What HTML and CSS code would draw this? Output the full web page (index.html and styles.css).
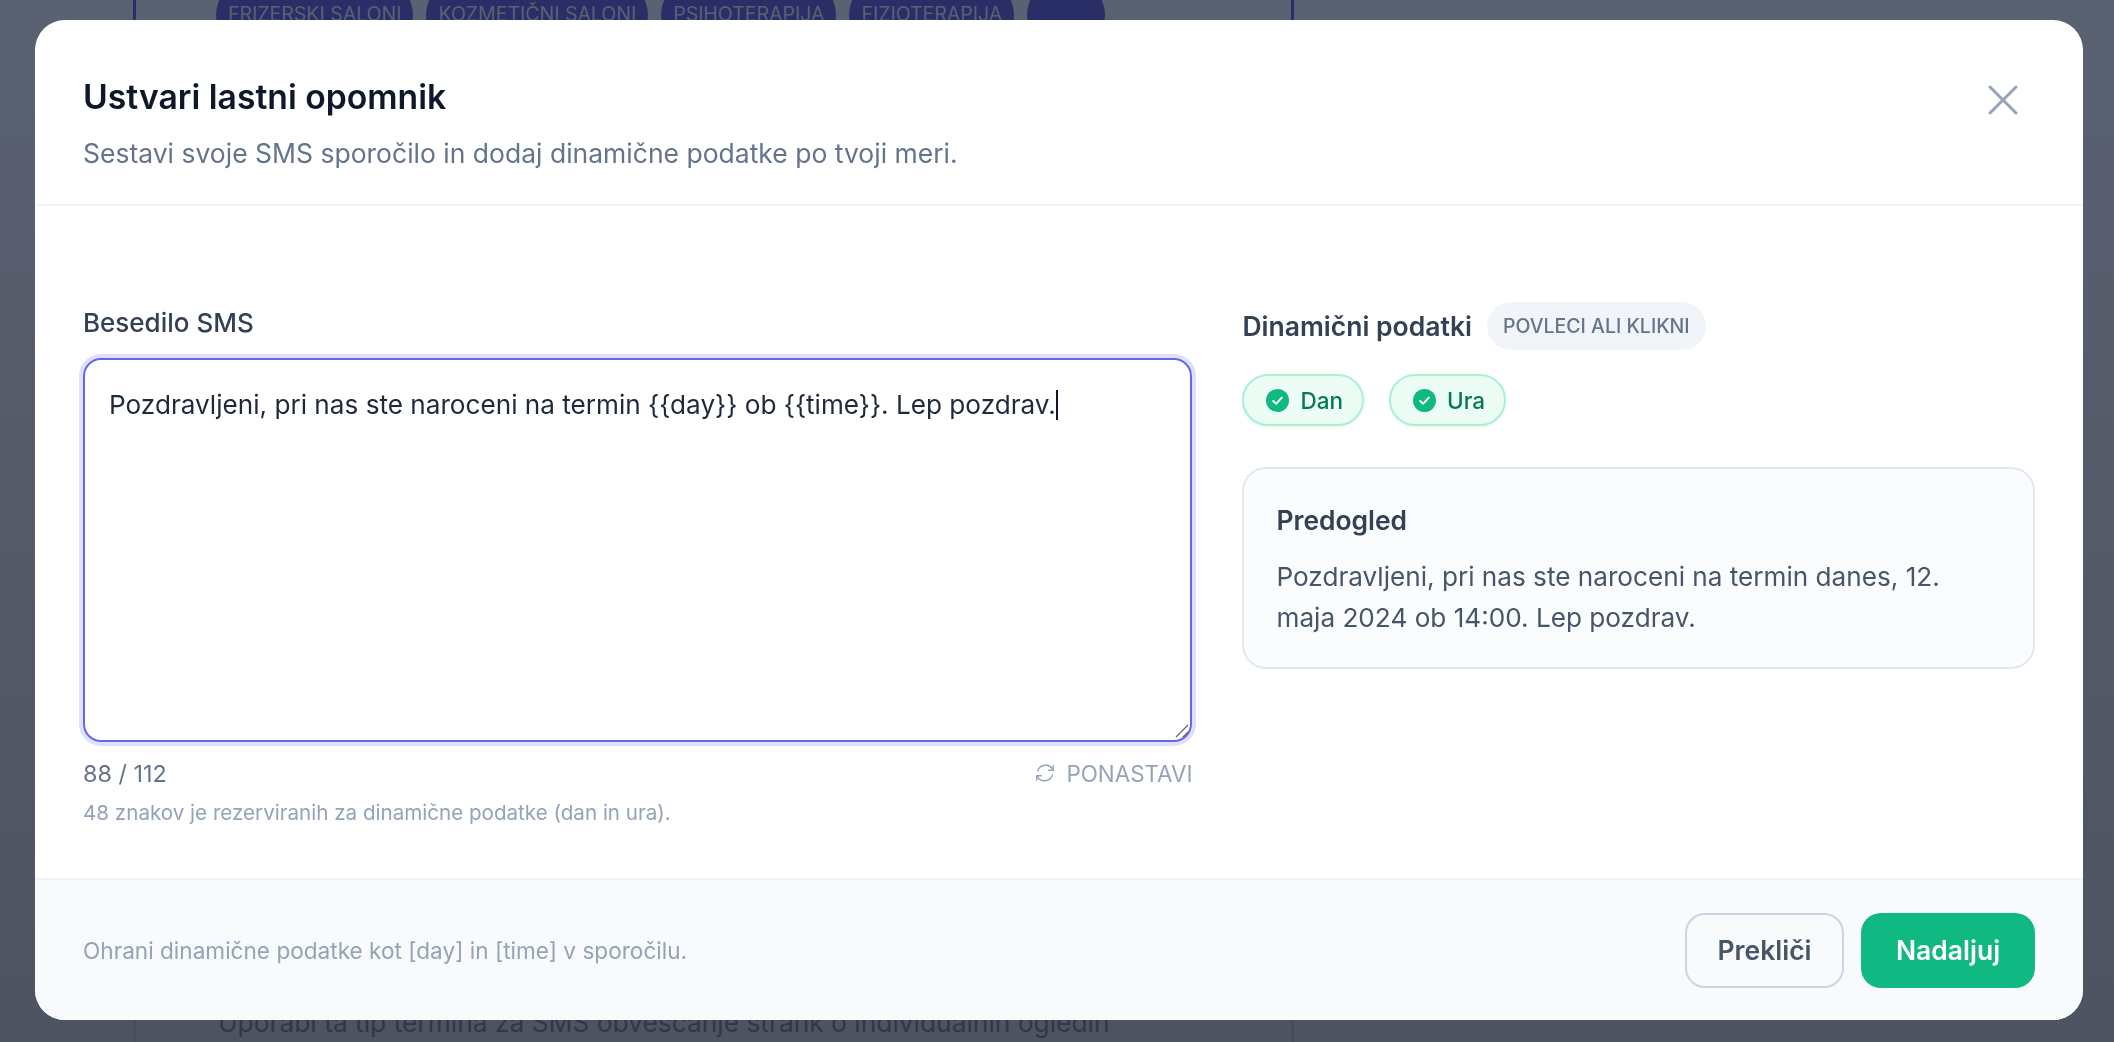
FILE: index.html
```html
<!DOCTYPE html>
<html lang="sl">
<head>
    <meta charset="UTF-8">
    <meta name="viewport" content="width=device-width, initial-scale=1.0">
    <title>Ustvari lastni opomnik</title>
    <link rel="stylesheet" href="styles.css">
</head>
<body>
    <div class="behind">
        <div class="behind-tags">
            <span class="behind-tag">FRIZERSKI SALONI</span>
            <span class="behind-tag">KOZMETIČNI SALONI</span>
            <span class="behind-tag">PSIHOTERAPIJA</span>
            <span class="behind-tag">FIZIOTERAPIJA</span>
            <span class="behind-tag behind-tag-more"></span>
        </div>
        <p class="behind-text">Uporabi ta tip termina za SMS obveščanje strank o individualnih ogledih</p>
    </div>

    <div class="overlay">
        <div class="modal">
            <div class="modal-header">
                <div>
                    <h2>Ustvari lastni opomnik</h2>
                    <p class="subtitle">Sestavi svoje SMS sporočilo in dodaj dinamične podatke po tvoji meri.</p>
                </div>
                <button class="close" aria-label="Zapri">
                    <svg width="32" height="32" viewBox="0 0 32 32" fill="none" stroke="#94a3b8" stroke-width="3" stroke-linecap="round"><path d="M3 3l26 26M29 3L3 29"/></svg>
                </button>
            </div>

            <div class="modal-body">
                <div class="col-left">
                    <label class="field-label">Besedilo SMS</label>
                    <div class="sms-wrap">
                        <div class="sms-input" role="textbox">Pozdravljeni, pri nas ste naroceni na termin {{day}} ob {{time}}. Lep pozdrav.<span class="caret"></span></div>
                        <svg class="resize-handle" width="14" height="14" viewBox="0 0 14 14" fill="none" stroke="#666" stroke-width="1.2"><path d="M1 13L13 1M8 13l5-5"/></svg>
                    </div>
                    <div class="meta-row">
                        <span class="counter">88 / 112</span>
                        <button class="reset">
                            <svg width="22" height="22" viewBox="0 0 24 24" fill="none" stroke="#94a3b8" stroke-width="1.5" stroke-linecap="round" stroke-linejoin="round"><path d="M16 9h5V4"/><path d="M20.6 8.6A9 9 0 0 0 4 9.5"/><path d="M8 15H3v5"/><path d="M3.4 15.4A9 9 0 0 0 20 14.5"/></svg>
                            PONASTAVI
                        </button>
                    </div>
                    <p class="hint">48 znakov je rezerviranih za dinamične podatke (dan in ura).</p>
                </div>

                <div class="col-right">
                    <div class="dyn-head">
                        <span class="dyn-title">Dinamični podatki</span>
                        <span class="dyn-badge">POVLECI ALI KLIKNI</span>
                    </div>
                    <div class="chips">
                        <span class="chip">
                            <svg width="23" height="23" viewBox="0 0 24 24"><circle cx="12" cy="12" r="12" fill="#10b981"/><path d="M7.5 12.5l3 3 6-6.5" fill="none" stroke="#fff" stroke-width="2" stroke-linecap="round" stroke-linejoin="round"/></svg>
                            Dan
                        </span>
                        <span class="chip">
                            <svg width="23" height="23" viewBox="0 0 24 24"><circle cx="12" cy="12" r="12" fill="#10b981"/><path d="M7.5 12.5l3 3 6-6.5" fill="none" stroke="#fff" stroke-width="2" stroke-linecap="round" stroke-linejoin="round"/></svg>
                            Ura
                        </span>
                    </div>
                    <div class="preview">
                        <h4>Predogled</h4>
                        <p>Pozdravljeni, pri nas ste naroceni na termin danes, 12. maja 2024 ob 14:00. Lep pozdrav.</p>
                    </div>
                </div>
            </div>

            <div class="modal-footer">
                <span class="footer-note">Ohrani dinamične podatke kot [day] in [time] v sporočilu.</span>
                <div class="buttons">
                    <button class="btn btn-cancel">Prekliči</button>
                    <button class="btn btn-next">Nadaljuj</button>
                </div>
            </div>
        </div>
    </div>
</body>
</html>
```

FILE: styles.css
```css
* {
    box-sizing: border-box;
}
body {
    margin: 0;
    height: 1042px;
    overflow: hidden;
    font-family: Inter, "Noto Sans", sans-serif;
    background: linear-gradient(180deg, #5a6170 0%, #4e5361 100%);
}
h2, h4, p {
    margin: 0;
}
button {
    font-family: inherit;
    cursor: pointer;
}

/* dimmed page under the modal */
.behind {
    width: 1161px;
    height: 1042px;
    margin-left: 133px;
    border-left: 3px solid;
    border-right: 3px solid;
    border-image: linear-gradient(180deg, #2a2f6b 0, #2a2f6b 30px, #474c5c 990px) 1;
    display: flex;
    flex-direction: column;
    justify-content: space-between;
}
.behind-tags {
    display: flex;
    gap: 13px;
    padding-left: 80px;
    margin-top: -20px;
}
.behind-tag {
    height: 70px;
    padding: 22px 12px 0;
    border-radius: 35px;
    background: #292e66;
    color: #5a6074;
    font-size: 19.5px;
    white-space: nowrap;
}
.behind-tag-more {
    width: 78px;
}
.behind-text {
    padding-left: 82px;
    margin-bottom: 2px;
    color: #32364a;
    font-size: 26.35px;
    line-height: 36px;
    white-space: nowrap;
}

.overlay {
    position: fixed;
    inset: 0;
    padding: 0 0 2px 4px;
    display: flex;
    align-items: center;
    justify-content: center;
}
.modal {
    width: 2048px;
    height: 1000px;
    background: #fff;
    border-radius: 30px;
    display: flex;
    flex-direction: column;
    overflow: hidden;
}

.modal-header {
    display: flex;
    justify-content: space-between;
    align-items: flex-start;
    height: 186px;
    padding: 56px 48px 0;
    border-bottom: 2px solid #f1f5f9;
}
.modal-header h2 {
    font-size: 33.7px;
    line-height: 42px;
    font-weight: 600;
    color: #0f172a;
}
.subtitle {
    margin-top: 15px;
    font-size: 26.5px;
    line-height: 40px;
    color: #64748b;
}
.close {
    border: none;
    background: none;
    padding: 0;
    margin: 8px 16px 0 0;
    width: 32px;
    height: 32px;
}

.modal-body {
    flex: 1;
    display: grid;
    grid-template-columns: 1.4fr 1fr;
    gap: 50px;
    padding: 96px 48px 0;
}
.field-label {
    display: block;
    font-size: 26px;
    line-height: 42px;
    font-weight: 500;
    color: #334155;
    margin-bottom: 14px;
}
.sms-wrap {
    position: relative;
}
.sms-input {
    height: 384px;
    width: 100%;
    padding: 27px 24px;
    border: 2px solid #6366f1;
    border-radius: 18px;
    box-shadow: 0 0 0 4px rgba(99, 102, 241, 0.2);
    font-size: 26.15px;
    line-height: 36px;
    color: #1e293b;
    overflow: auto;
}
.caret {
    display: inline-block;
    width: 2px;
    height: 30px;
    vertical-align: -6px;
    background: #0f172a;
}
.resize-handle {
    position: absolute;
    right: 3px;
    bottom: 4px;
}
.meta-row {
    display: flex;
    justify-content: space-between;
    align-items: center;
    margin-top: 15px;
    height: 32px;
}
.counter {
    font-size: 23.4px;
    color: #64748b;
}
.reset {
    display: flex;
    align-items: center;
    gap: 10px;
    border: none;
    background: none;
    padding: 0;
    font-size: 22.4px;
    color: #94a3b8;
}
.hint {
    margin-top: 10px;
    font-size: 20.6px;
    line-height: 28px;
    color: #94a3b8;
}

.dyn-head {
    display: flex;
    align-items: center;
    gap: 15px;
    height: 48px;
}
.dyn-title {
    font-size: 26.5px;
    font-weight: 600;
    color: #334155;
}
.dyn-badge {
    height: 48px;
    line-height: 48px;
    padding: 0 16px;
    border-radius: 24px;
    background: #f1f5f9;
    font-size: 19.5px;
    font-weight: 500;
    color: #64748b;
}
.chips {
    display: flex;
    gap: 25px;
    margin-top: 24px;
}
.chip {
    display: flex;
    align-items: center;
    gap: 11px;
    height: 52px;
    padding: 0 19px 0 22px;
    border: 2px solid #a7f3d0;
    border-radius: 26px;
    background: #ecfdf5;
    box-shadow: 0 1px 3px rgba(0, 0, 0, 0.06);
    font-size: 22.5px;
    font-weight: 500;
    color: #047857;
}
.preview {
    margin-top: 41px;
    height: 202px;
    padding: 35px 40px 0 32px;
    border: 2px solid #e2e8f0;
    border-radius: 24px;
    background: #fbfcfe;
}
.preview h4 {
    font-size: 26.4px;
    line-height: 32px;
    font-weight: 600;
    color: #334155;
}
.preview p {
    margin-top: 20px;
    font-size: 26.15px;
    line-height: 41px;
    color: #475569;
}

.modal-footer {
    display: flex;
    justify-content: space-between;
    align-items: center;
    height: 142px;
    padding: 0 48px;
    border-top: 2px solid #f1f5f9;
    background: #f8fafc;
}
.footer-note {
    font-size: 22.6px;
    color: #94a3b8;
}
.buttons {
    display: flex;
    gap: 17px;
}
.btn {
    height: 75px;
    border-radius: 20px;
    font-size: 26.5px;
    font-weight: 600;
}
.btn-cancel {
    width: 159px;
    background: none;
    border: 2px solid #cbd5e1;
    color: #475569;
}
.btn-next {
    width: 174px;
    background: #10b981;
    border: none;
    color: #fff;
}
```
